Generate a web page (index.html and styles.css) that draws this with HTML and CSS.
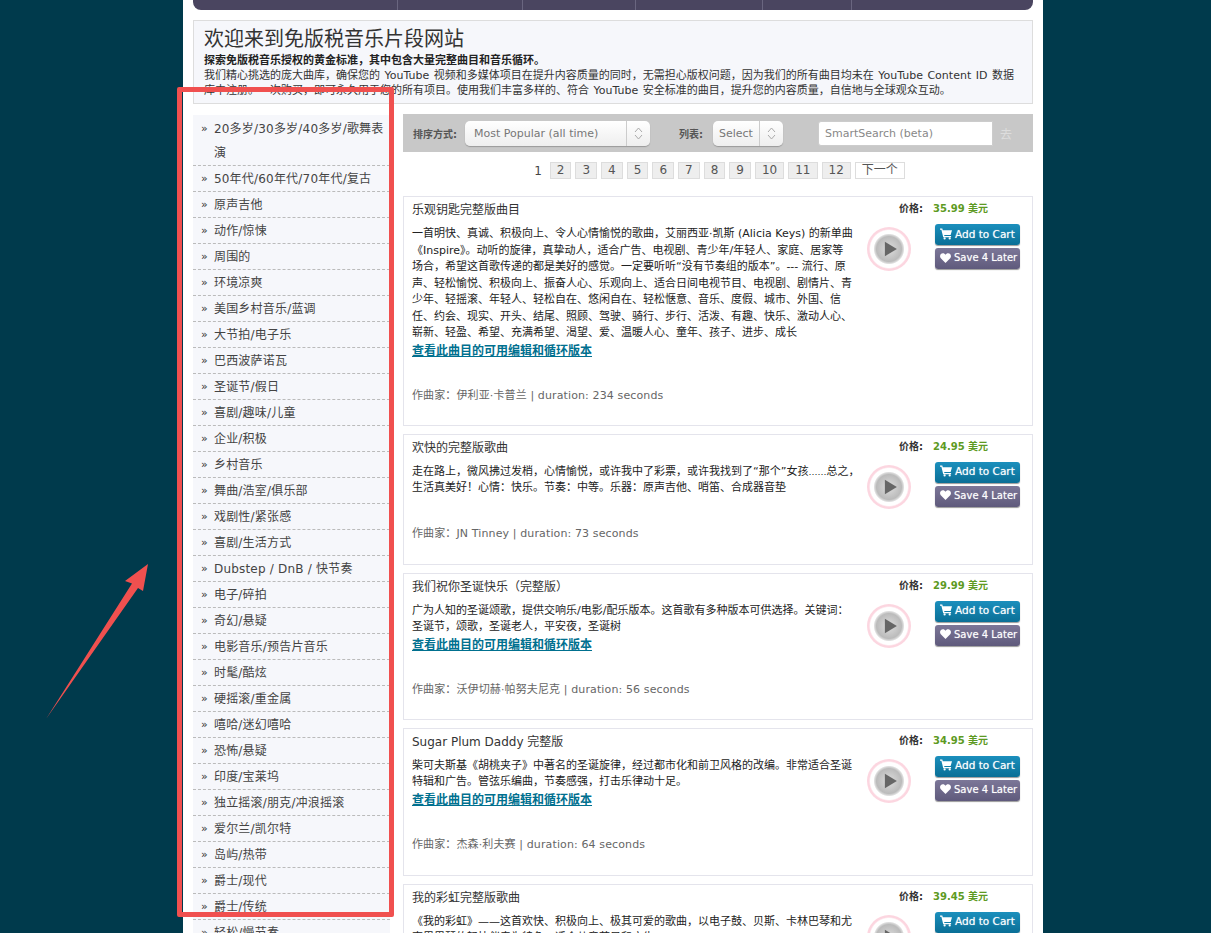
FILE: index.html
```html
<!DOCTYPE html>
<html lang="zh">
<head>
  <meta charset="UTF-8" />
  <title>免版税音乐片段网站</title>
  <link rel="stylesheet" href="styles.css">
</head>

<body>
  <div class="page">
    <div class="nav">
      <span class="nav-item w1"></span>
      <span class="nav-item w2"></span>
      <span class="nav-item w3"></span>
      <span class="nav-item w4"></span>
      <span class="nav-item w5"></span>
    </div>

    <div class="intro">
      <h1>欢迎来到免版税音乐片段网站</h1>
      <p class="lead">探索免版税音乐授权的黄金标准，其中包含大量完整曲目和音乐循环。</p>
      <p>我们精心挑选的庞大曲库，确保您的 YouTube 视频和多媒体项目在提升内容质量的同时，无需担心版权问题，因为我们的所有曲目均未在 YouTube Content ID 数据库中注册。一次购买，即可永久用于您的所有项目。使用我们丰富多样的、符合 YouTube 安全标准的曲目，提升您的内容质量，自信地与全球观众互动。</p>
    </div>

    <div class="columns">
      <ul class="genres">
        <li>20多岁/30多岁/40多岁/歌舞表演</li>
        <li>50年代/60年代/70年代/复古</li>
        <li>原声吉他</li>
        <li>动作/惊悚</li>
        <li>周围的</li>
        <li>环境凉爽</li>
        <li>美国乡村音乐/蓝调</li>
        <li>大节拍/电子乐</li>
        <li>巴西波萨诺瓦</li>
        <li>圣诞节/假日</li>
        <li>喜剧/趣味/儿童</li>
        <li>企业/积极</li>
        <li>乡村音乐</li>
        <li>舞曲/浩室/俱乐部</li>
        <li>戏剧性/紧张感</li>
        <li>喜剧/生活方式</li>
        <li>Dubstep / DnB / 快节奏</li>
        <li>电子/碎拍</li>
        <li>奇幻/悬疑</li>
        <li>电影音乐/预告片音乐</li>
        <li>时髦/酷炫</li>
        <li>硬摇滚/重金属</li>
        <li>嘻哈/迷幻嘻哈</li>
        <li>恐怖/悬疑</li>
        <li>印度/宝莱坞</li>
        <li>独立摇滚/朋克/冲浪摇滚</li>
        <li>爱尔兰/凯尔特</li>
        <li>岛屿/热带</li>
        <li>爵士/现代</li>
        <li>爵士/传统</li>
        <li>轻松/慢节奏</li>
      </ul>

      <div class="main">
        <div class="toolbar">
          <span class="tool-label">排序方式:</span>
          <div class="select sort"><span>Most Popular (all time)</span><i><svg width="9" height="13" viewBox="0 0 9 13"><path d="M1 5 L4.500 1 L8 5 M1 8 L4.500 12 L8 8" /></svg></i></div>
          <span class="tool-label list-label">列表:</span>
          <div class="select list"><span>Select</span><i><svg width="9" height="13" viewBox="0 0 9 13"><path d="M1 5 L4.500 1 L8 5 M1 8 L4.500 12 L8 8" /></svg></i></div>
          <input class="search" type="text" placeholder="SmartSearch (beta)" />
          <span class="go">去</span>
        </div>

        <div class="pager">
          <span class="current">1</span>
          <a>2</a><a>3</a><a>4</a><a>5</a><a>6</a><a>7</a><a>8</a><a>9</a><a>10</a><a>11</a><a>12</a>
          <a class="next">下一个</a>
        </div>

        <div class="track">
          <div class="info">
            <div class="name">乐观钥匙完整版曲目</div>
            <div class="desc">一首明快、真诚、积极向上、令人心情愉悦的歌曲，艾丽西亚·凯斯 (Alicia Keys) 的新单曲《Inspire》。动听的旋律，真挚动人，适合广告、电视剧、青少年/年轻人、家庭、居家等场合，希望这首歌传递的都是美好的感觉。一定要听听“没有节奏组的版本”。--- 流行、原声、轻松愉悦、积极向上、振奋人心、乐观向上、适合日间电视节目、电视剧、剧情片、青少年、轻摇滚、年轻人、轻松自在、悠闲自在、轻松惬意、音乐、度假、城市、外国、信任、约会、现实、开头、结尾、照顾、驾驶、骑行、步行、活泼、有趣、快乐、激动人心、崭新、轻盈、希望、充满希望、渴望、爱、温暖人心、童年、孩子、进步、成长</div>
            <a class="edits">查看此曲目的可用编辑和循环版本</a>
            <div class="composer">作曲家：伊利亚·卡普兰 | duration: 234 seconds</div>
          </div>
          <div class="buy">
            <div class="price"><b>价格:</b><span>35.99 美元</span></div>
            <div class="actions">
              <div class="play"><svg viewBox="0 0 18 20"><path d="M2 1 L17 10 L2 19 Z" /></svg></div>
              <div class="buttons">
                <a class="btn cart"><svg width="12" height="12" viewBox="0 0 13 12"><path d="M0 0h2.5l.5 2h10l-1.500 5H4.500l.3 1.200h7.200V9.500H3.500L1.500 1.300H0z" /><circle cx="5" cy="10.800" r="1.200" /><circle cx="10.500" cy="10.800" r="1.200" /></svg>Add to Cart</a>
                <a class="btn later"><svg width="11" height="10" viewBox="0 0 11 10"><path d="M5.500 10 L.8 5.200 C-.8 3.300 .3 .2 2.900 .2 C4.100 .2 5 .9 5.500 1.800 C6 .9 6.900 .2 8.100 .2 C10.700 .2 11.800 3.300 10.200 5.200 Z" /></svg>Save 4 Later</a>
              </div>
            </div>
          </div>
        </div>

        <div class="track">
          <div class="info">
            <div class="name">欢快的完整版歌曲</div>
            <div class="desc"><span class="line">走在路上，微风拂过发梢，心情愉悦，或许我中了彩票，或许我找到了“那个”女孩<span class="dots">……</span>总之，</span><br>生活真美好！心情：快乐。节奏：中等。乐器：原声吉他、哨笛、合成器音垫</div>
            <div class="composer">作曲家：JN Tinney | duration: 73 seconds</div>
          </div>
          <div class="buy">
            <div class="price"><b>价格:</b><span>24.95 美元</span></div>
            <div class="actions">
              <div class="play"><svg viewBox="0 0 18 20"><path d="M2 1 L17 10 L2 19 Z" /></svg></div>
              <div class="buttons">
                <a class="btn cart"><svg width="12" height="12" viewBox="0 0 13 12"><path d="M0 0h2.5l.5 2h10l-1.500 5H4.500l.3 1.200h7.200V9.500H3.500L1.500 1.300H0z" /><circle cx="5" cy="10.800" r="1.200" /><circle cx="10.500" cy="10.800" r="1.200" /></svg>Add to Cart</a>
                <a class="btn later"><svg width="11" height="10" viewBox="0 0 11 10"><path d="M5.500 10 L.8 5.200 C-.8 3.300 .3 .2 2.900 .2 C4.100 .2 5 .9 5.500 1.800 C6 .9 6.900 .2 8.100 .2 C10.700 .2 11.800 3.300 10.200 5.200 Z" /></svg>Save 4 Later</a>
              </div>
            </div>
          </div>
        </div>

        <div class="track">
          <div class="info">
            <div class="name">我们祝你圣诞快乐（完整版）</div>
            <div class="desc">广为人知的圣诞颂歌，提供交响乐/电影/配乐版本。这首歌有多种版本可供选择。关键词：圣诞节，颂歌，圣诞老人，平安夜，圣诞树</div>
            <a class="edits">查看此曲目的可用编辑和循环版本</a>
            <div class="composer">作曲家：沃伊切赫·帕努夫尼克 | duration: 56 seconds</div>
          </div>
          <div class="buy">
            <div class="price"><b>价格:</b><span>29.99 美元</span></div>
            <div class="actions">
              <div class="play"><svg viewBox="0 0 18 20"><path d="M2 1 L17 10 L2 19 Z" /></svg></div>
              <div class="buttons">
                <a class="btn cart"><svg width="12" height="12" viewBox="0 0 13 12"><path d="M0 0h2.5l.5 2h10l-1.500 5H4.500l.3 1.200h7.200V9.500H3.500L1.500 1.300H0z" /><circle cx="5" cy="10.800" r="1.200" /><circle cx="10.500" cy="10.800" r="1.200" /></svg>Add to Cart</a>
                <a class="btn later"><svg width="11" height="10" viewBox="0 0 11 10"><path d="M5.500 10 L.8 5.200 C-.8 3.300 .3 .2 2.900 .2 C4.100 .2 5 .9 5.500 1.800 C6 .9 6.900 .2 8.100 .2 C10.700 .2 11.800 3.300 10.200 5.200 Z" /></svg>Save 4 Later</a>
              </div>
            </div>
          </div>
        </div>

        <div class="track tall">
          <div class="info">
            <div class="name">Sugar Plum Daddy 完整版</div>
            <div class="desc">柴可夫斯基《胡桃夹子》中著名的圣诞旋律，经过都市化和前卫风格的改编。非常适合圣诞特辑和广告。管弦乐编曲，节奏感强，打击乐律动十足。</div>
            <a class="edits">查看此曲目的可用编辑和循环版本</a>
            <div class="composer">作曲家：杰森·利夫赛 | duration: 64 seconds</div>
          </div>
          <div class="buy">
            <div class="price"><b>价格:</b><span>34.95 美元</span></div>
            <div class="actions">
              <div class="play"><svg viewBox="0 0 18 20"><path d="M2 1 L17 10 L2 19 Z" /></svg></div>
              <div class="buttons">
                <a class="btn cart"><svg width="12" height="12" viewBox="0 0 13 12"><path d="M0 0h2.5l.5 2h10l-1.500 5H4.500l.3 1.200h7.200V9.500H3.500L1.500 1.300H0z" /><circle cx="5" cy="10.800" r="1.200" /><circle cx="10.500" cy="10.800" r="1.200" /></svg>Add to Cart</a>
                <a class="btn later"><svg width="11" height="10" viewBox="0 0 11 10"><path d="M5.500 10 L.8 5.200 C-.8 3.300 .3 .2 2.900 .2 C4.100 .2 5 .9 5.500 1.800 C6 .9 6.900 .2 8.100 .2 C10.700 .2 11.800 3.300 10.200 5.200 Z" /></svg>Save 4 Later</a>
              </div>
            </div>
          </div>
        </div>

        <div class="track">
          <div class="info">
            <div class="name">我的彩虹完整版歌曲</div>
            <div class="desc">《我的彩虹》——这首欢快、积极向上、极其可爱的歌曲，以电子鼓、贝斯、卡林巴琴和尤克里里琴的轻快伴奏为特色，适合儿童节目和广告。</div>
          </div>
          <div class="buy">
            <div class="price"><b>价格:</b><span>39.45 美元</span></div>
            <div class="actions">
              <div class="play"><svg viewBox="0 0 18 20"><path d="M2 1 L17 10 L2 19 Z" /></svg></div>
              <div class="buttons">
                <a class="btn cart"><svg width="12" height="12" viewBox="0 0 13 12"><path d="M0 0h2.5l.5 2h10l-1.500 5H4.500l.3 1.200h7.200V9.500H3.500L1.500 1.300H0z" /><circle cx="5" cy="10.800" r="1.200" /><circle cx="10.500" cy="10.800" r="1.200" /></svg>Add to Cart</a>
              </div>
            </div>
          </div>
        </div>
      </div>
    </div>
  </div>

  <!-- annotation drawn over the screenshot -->
  <div class="highlight"></div>
  <svg class="arrow" width="115" height="165" viewBox="0 0 115 165">
    <path d="M108 4 L85 21 L92 23.500 L6 159 L98 28 L103 31 Z" />
  </svg>
</body>
</html>
```

FILE: styles.css
```css
* {
  box-sizing: border-box;
}

html, body {
  height: 100vh;
  overflow: hidden;
}

body {
  margin: 0;
  padding-left: 183px;
  background-color: #003a4c;
  color: #333;
  font-family: "DejaVu Sans", "Noto Sans CJK SC", sans-serif;
  font-size: 11px;
  position: relative;
}

.page {
  width: 860px;
  height: 100%;
  padding: 0 10px;
  background: white;
  overflow: hidden;
}

.nav {
  display: flex;
  height: 10px;
  background-color: #4a4560;
  border-radius: 0 0 8px 8px;
}

.nav-item {
  border-right: 1px solid #6a6680;
}

.w1 { width: 205px; }
.w2 { width: 125px; }
.w3 { width: 113px; }
.w4 { width: 127px; }
.w5 { width: 89px; }

.intro {
  margin-top: 10px;
  height: 84px;
  padding: 5px 17px 5px 10px;
  background-color: #f6f7fb;
  border: 1px solid #ddd;
  line-height: 15px;
}

.intro h1 {
  margin: 0;
  font-size: 20px;
  font-weight: normal;
  line-height: 27px;
  color: #333;
}

.intro p {
  margin: 0;
  color: #333;
  word-spacing: 1px;
}

.intro .lead {
  font-weight: bold;
  color: #222;
}

.columns {
  display: flex;
  gap: 13px;
  margin-top: 10px;
}

.genres {
  width: 197px;
  flex-shrink: 0;
  margin: 1px 0 0;
  padding: 1px 0 0;
  list-style: none;
  background-color: #f6f7fb;
  font-size: 12px;
  line-height: 24px;
  letter-spacing: 0.2px;
  color: #444;
}

.genres li {
  display: flex;
  gap: 6px;
  padding: 1px 4px 0 8px;
  border-bottom: 1px dashed #bbb;
}

.genres li::before {
  content: "»";
  font-size: 11px;
  color: #333;
}

.main {
  width: 630px;
}

.toolbar {
  display: flex;
  align-items: center;
  height: 38px;
  padding-left: 10px;
  background-color: #c8c8c8;
}

.tool-label {
  width: 52px;
  font-size: 10px;
  font-weight: bold;
  color: #555;
}

.list-label {
  width: 34px;
  margin-left: 29px;
}

.select {
  display: flex;
  align-items: center;
  justify-content: space-between;
  height: 25px;
  background: linear-gradient(#fff, #eee);
  border-radius: 5px;
  box-shadow: 0 1px 1px #999;
  color: #777;
}

.select span {
  padding-left: 9px;
}

.select i {
  display: flex;
  align-items: center;
  justify-content: center;
  width: 24px;
  height: 25px;
  border-left: 1px solid #ccc;
}

.select svg {
  fill: none;
  stroke: #aaa;
}

.sort {
  width: 185px;
}

.list {
  width: 70px;
}

.list span {
  padding-left: 6px;
}

.search {
  width: 175px;
  height: 25px;
  margin-left: 35px;
  padding: 0 6px;
  background: white;
  border: 1px solid #ccc;
  border-radius: 3px 0 0 3px;
  font: inherit;
  color: #777;
}

.search::placeholder {
  color: #888;
  opacity: 1;
}

.go {
  margin-left: 7px;
  font-size: 12px;
  color: #ddd;
}

.pager {
  display: flex;
  justify-content: center;
  align-items: center;
  gap: 4px;
  height: 17px;
  margin: 10px 0 17px;
  padding-left: 3px;
  font-size: 12px;
  color: #444;
}

.pager .current {
  margin-right: 4px;
}

.pager a {
  height: 17px;
  padding: 0 6px;
  background-color: #eee;
  border: 1px solid #ddd;
  line-height: 15px;
  color: #555;
}

.pager a.next {
  background: white;
}

.track {
  display: flex;
  gap: 13px;
  margin-bottom: 8px;
  padding: 4px 12px 0 8px;
  border: 1px solid #e4e4ec;
}

.track.tall {
  padding-bottom: 1px;
}

.info {
  width: 442px;
  flex-shrink: 0;
  padding-bottom: 21px;
}

.name {
  margin-bottom: 7px;
  font-size: 12px;
  line-height: 18px;
  color: #333;
}

.desc {
  line-height: 16.5px;
  color: #222;
}

.desc .line {
  white-space: nowrap;
}

.dots {
  font-size: 9px;
}

.edits {
  display: block;
  margin-top: 1px;
  font-size: 12px;
  font-weight: bold;
  line-height: 16px;
  color: #00708f;
  text-decoration: underline;
}

.composer {
  margin-top: 29px;
  line-height: 16px;
  letter-spacing: 0.12px;
  color: #666;
}

.desc + .composer {
  margin-bottom: 1px;
}

.price {
  display: flex;
  gap: 10px;
  margin: 2px 0 9px 32px;
  font-size: 10px;
  line-height: 12px;
}

.price b {
  color: #333;
}

.price span {
  font-weight: bold;
  color: #5d9a23;
}

.actions {
  display: flex;
  gap: 24px;
}

.play {
  display: flex;
  align-items: center;
  justify-content: center;
  width: 44px;
  height: 44px;
  margin-top: 3px;
  background: radial-gradient(circle, #ddd 0, #bbb 12.500px, #ddd 14.500px, #fff 15.500px, #fff 18.500px, #fcd6e0 20px, #fcd6e0 22px);
  border-radius: 50%;
}

.play svg {
  width: 15px;
  height: 16px;
  fill: #666;
  margin-left: 2px;
}

.buttons {
  display: flex;
  flex-direction: column;
  gap: 3px;
}

.btn {
  display: flex;
  align-items: center;
  gap: 3px;
  width: 85px;
  height: 21px;
  padding: 0 0 2px 5px;
  border-radius: 3px;
  font-size: 10.500px;
  white-space: nowrap;
  color: white;
  text-shadow: 0 0 1px rgba(255, 255, 255, 0.6);
  box-shadow: 0 1px 1px #999;
}

.btn svg {
  fill: white;
  flex-shrink: 0;
}

.cart {
  background: linear-gradient(#1b8fbd, #0a6f96);
}

.later {
  background: linear-gradient(#7c7798, #5f5a7c);
  font-size: 10px;
}

.highlight {
  position: absolute;
  left: 177px;
  top: 87px;
  width: 217px;
  height: 830px;
  border: 5px solid #f0504f;
  border-radius: 2px;
}

.arrow {
  position: absolute;
  left: 40px;
  top: 560px;
}

.arrow path {
  fill: #f0504f;
}
```
